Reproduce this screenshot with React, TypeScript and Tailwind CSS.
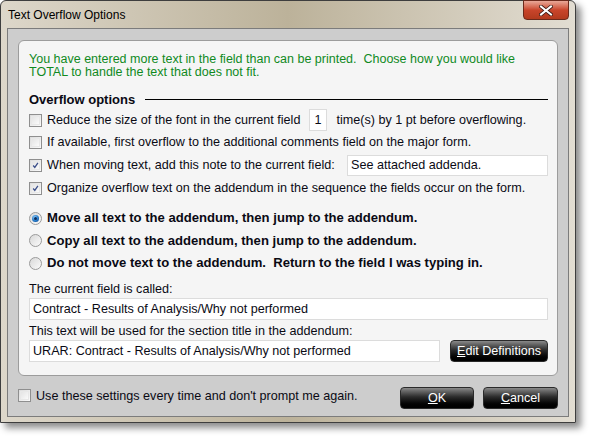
import React from "react";

function Check(props: { checked?: boolean }) {
  return (
    <span className="flex h-[13px] w-[13px] shrink-0 items-center justify-center border border-[#8f8f8f] bg-gradient-to-br from-[#dcdcdc] to-[#fbfbfb]">
      <span className="flex h-[9px] w-[9px] items-center justify-center border border-[#e8e8e8] bg-gradient-to-br from-[#e4e4e4] to-[#fafafa]">
        {props.checked && (
          <svg width="9" height="9" viewBox="0 0 9 9">
            <path d="M1.5 4.5 L3.6 7 L7.6 1.2" fill="none" stroke="#3c4f8a" strokeWidth="1.7" />
          </svg>
        )}
      </span>
    </span>
  );
}

function Radio(props: { checked?: boolean }) {
  return (
    <span className="flex h-[13px] w-[13px] shrink-0 items-center justify-center rounded-full border border-[#9a9a9a] bg-gradient-to-br from-[#d8d8d8] to-[#fbfbfb]">
      {props.checked && (
        <span className="flex h-[7px] w-[7px] items-center justify-center rounded-full bg-[radial-gradient(circle_at_40%_35%,#8fd0ff,#1a6fc0_60%,#0d3f80)]">
          <span className="h-[3px] w-[3px] rounded-full bg-[#0b2c5c]" />
        </span>
      )}
    </span>
  );
}

function BlackButton(props: { hot: string; rest: string; className: string }) {
  return (
    <button
      className={`flex h-[22px] items-center justify-center rounded-[4px] border border-[#2a2a2a] bg-gradient-to-b from-[#8a8a8a] via-[#2b2b2b] via-45% to-black text-[12.6px] text-white ${props.className}`}
    >
      <span>
        <span className="underline">{props.hot}</span>
        {props.rest}
      </span>
    </button>
  );
}

export default function App() {
  return (
    <div className="h-[438px] w-[591px] bg-white font-['Liberation_Sans',Arial,sans-serif] text-[12.6px] text-[#0a0a14]">
      <div className="relative flex h-[423px] w-[576px] flex-col rounded-t-[6px] border border-[#3e3e3e] bg-gradient-to-r from-[#ddd7ca] via-[#bcb29a] to-[#e2ddd2] shadow-[5px_5px_7px_rgba(0,0,0,0.45)]">
        <div className="flex h-[28px] items-center pl-[7px] text-[12px] text-black">Text Overflow Options</div>
        <div className="absolute right-[6px] top-[-1px] flex h-[20px] w-[46px] items-center justify-center rounded-b-[4px] border border-[#6b2a1c] bg-gradient-to-b from-[#e8a898] via-[#c9452b] via-50% to-[#b23a1e]">
          <svg width="14" height="11" viewBox="0 0 14 11">
            <path d="M2 1.5 L12 9.5 M12 1.5 L2 9.5" stroke="#3b1a14" strokeWidth="3.6" strokeLinecap="square" />
            <path d="M2 1.5 L12 9.5 M12 1.5 L2 9.5" stroke="#ffffff" strokeWidth="2" strokeLinecap="square" />
          </svg>
        </div>
        <div className="mx-[6px] mb-[5px] flex flex-1 flex-col border border-[#7c7c7c] bg-[#cdcdcd] px-[10px] pt-[11px]">
          <div className="flex h-[336px] flex-col rounded-[6px] border border-[#9c9c9c] bg-[#f5f5f5] pl-[10px] pr-[9px] pt-[12px]">
            <p className="text-[12.5px] leading-[13px] text-[#108a1e]">
              You have entered more text in the field than can be printed.&nbsp; Choose how you would like
              <br />
              TOTAL to handle the text that does not fit.
            </p>
            <div className="mt-[11px] flex h-[19px] items-center gap-[10px]">
              <span className="text-[13px] font-bold">Overflow options</span>
              <span className="h-px flex-1 bg-black" />
            </div>
            <div className="flex h-[22px] items-center gap-[5px]">
              <Check />
              <span>Reduce the size of the font in the current field</span>
              <span className="ml-[4px] flex h-[22px] w-[18px] items-center border border-[#dcdcdc] bg-white pl-[4px]">1</span>
              <span className="ml-[4px]">time(s) by 1 pt before overflowing.</span>
            </div>
            <div className="flex h-[23px] items-center gap-[5px]">
              <Check />
              <span>If available, first overflow to the additional comments field on the major form.</span>
            </div>
            <div className="flex h-[23px] items-center gap-[5px]">
              <Check checked />
              <span>When moving text, add this note to the current field:</span>
              <span className="ml-auto flex h-[21px] w-[201px] items-center border border-[#dcdcdc] bg-white pl-[3px]">
                See attached addenda.
              </span>
            </div>
            <div className="flex h-[23px] items-center gap-[5px]">
              <Check checked />
              <span>Organize overflow text on the addendum in the sequence the fields occur on the form.</span>
            </div>
            <div className="mt-[7px] flex h-[22px] items-center gap-[5px] text-[13.1px] font-bold">
              <Radio checked />
              <span>Move all text to the addendum, then jump to the addendum.</span>
            </div>
            <div className="flex h-[23px] items-center gap-[5px] text-[13.1px] font-bold">
              <Radio />
              <span>Copy all text to the addendum, then jump to the addendum.</span>
            </div>
            <div className="flex h-[22px] items-center gap-[5px] text-[13.1px] font-bold">
              <Radio />
              <span>Do not move text to the addendum.&nbsp; Return to the field I was typing in.</span>
            </div>
            <div className="mt-[7px] flex h-[16px] items-center">The current field is called:</div>
            <div className="mt-[1px] flex h-[22px] items-center border border-[#dcdcdc] bg-white pl-[3px]">
              Contract - Results of Analysis/Why not performed
            </div>
            <div className="mt-[3px] flex h-[16px] items-center">
              This text will be used for the section title in the addendum:
            </div>
            <div className="mt-[1px] flex h-[22px] items-center gap-[10px]">
              <div className="flex h-[22px] flex-1 items-center border border-[#dcdcdc] bg-white pl-[3px]">
                URAR: Contract - Results of Analysis/Why not performed
              </div>
              <BlackButton hot="E" rest="dit Definitions" className="w-[98px]" />
            </div>
          </div>
          <div className="flex h-[40px] items-center">
            <div className="flex items-center gap-[5px]">
              <Check />
              <span>Use these settings every time and don't prompt me again.</span>
            </div>
            <div className="ml-auto flex gap-[9px] pt-[4px]">
              <BlackButton hot="O" rest="K" className="w-[74px]" />
              <BlackButton hot="C" rest="ancel" className="w-[75px]" />
            </div>
          </div>
        </div>
      </div>
    </div>
  );
}
